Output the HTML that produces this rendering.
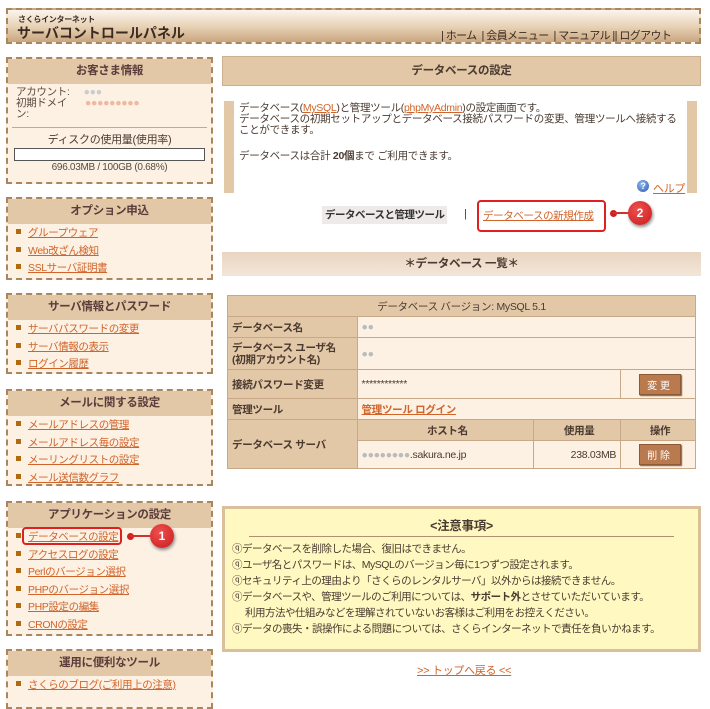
<!DOCTYPE html>
<html><head><meta charset="utf-8">
<style>
*{margin:0;padding:0;box-sizing:border-box}
body{width:710px;height:686px;overflow:hidden;background:#fff;font-family:"Liberation Sans","Noto Sans CJK JP",sans-serif;font-size:10.5px;color:#4a3a30;position:relative;letter-spacing:-0.3px}
.abs{position:absolute}
a{color:#d0642a;text-decoration:underline}
.hdr{left:6px;top:8px;width:695px;height:36px;border:2px dashed #a8865f;background:linear-gradient(#fbf5ee,#e9d3b8 50%,#c9a67f)}
.box{position:absolute;left:6px;width:207px;border:2px dashed #a8865f;background:#fdf1e4;overflow:hidden}
.box .t{background:#e3c8a8;text-align:center;font-weight:bold;font-size:11.5px;color:#5a3c3a;height:25px;line-height:25px}
.box ul{list-style:none;padding:1px 0 0 8px}
.box li{height:17.5px;line-height:17.5px;font-size:10.5px;letter-spacing:-0.4px}
.box li:before{content:"";display:inline-block;width:5px;height:5px;background:#b26a10;margin-right:7px;vertical-align:2px}
table{border-collapse:collapse}
td{border:1px solid #c9a887;font-size:10.5px}
.lb{background:#e3c8a8;color:#4a3a30;padding-left:4px;font-weight:bold}
.vl{background:#fdf1e4;padding-left:4px}
.btn{display:inline-block;background:#b97a4f;color:#fff;border:1px solid #8c5a36;box-shadow:1px 1px 1px #7a5a40;font-size:10px;padding:2px 7px;letter-spacing:3px}
.red{border:2px solid #e02020;border-radius:4px}
.num{width:24px;height:24px;border-radius:12px;background:radial-gradient(circle at 40% 35%,#f05050,#c81a1a);color:#fff;font-weight:bold;text-align:center;line-height:24px;font-size:12px;box-shadow:1px 2px 3px #888;letter-spacing:0}
.ln{height:2px;background:#d03030}
.dot{width:7px;height:7px;border-radius:4px;background:#d02020}
.nt div{white-space:nowrap}
</style></head><body>
<div class="abs hdr"></div>
<div class="abs" style="left:18px;top:14px;font-size:8px;font-weight:bold;color:#3a2a20">さくらインターネット</div>
<div class="abs" style="left:17px;top:23px;font-size:14px;font-weight:bold;color:#3a2a20;letter-spacing:0">サーバコントロールパネル</div>
<div class="abs" style="left:441px;top:27px;font-size:11px;color:#3a2a20;white-space:nowrap;letter-spacing:-0.6px">| ホーム &nbsp;| 会員メニュー &nbsp;| マニュアル || ログアウト</div>

<div class="box" style="top:57px;height:127px">
<div class="t">お客さま情報</div>
<div style="padding:3px 8px;font-size:10.5px;line-height:11px;color:#5a4a40">アカウント:<span style="color:#ccc;margin-left:14px">●●●</span><br>初期ドメイ<span style="color:#f0b8a0;margin-left:18px">●●●●●●●●●</span><br>ン:</div>
<div style="border-top:1px solid #c9a887;margin:4px 4px 0;padding-top:3px;text-align:center;font-size:11px">ディスクの使用量(使用率)</div>
<div style="margin:1px 6px;height:13px;border:1px solid #555;background:#fff"></div>
<div style="text-align:center;font-size:10px;color:#5a4a40">696.03MB / 100GB (0.68%)</div>
</div>
<div class="box" style="top:197px;height:83px"><div class="t">オプション申込</div><ul><li><a>グループウェア</a></li><li><a>Web改ざん検知</a></li><li><a>SSLサーバ証明書</a></li></ul></div>
<div class="box" style="top:293px;height:81px"><div class="t">サーバ情報とパスワード</div><ul><li><a>サーバパスワードの変更</a></li><li><a>サーバ情報の表示</a></li><li><a>ログイン履歴</a></li></ul></div>
<div class="box" style="top:389px;height:97px"><div class="t">メールに関する設定</div><ul><li><a>メールアドレスの管理</a></li><li><a>メールアドレス毎の設定</a></li><li><a>メーリングリストの設定</a></li><li><a>メール送信数グラフ</a></li></ul></div>
<div class="box" style="top:501px;height:135px"><div class="t">アプリケーションの設定</div><ul><li><a>データベースの設定</a></li><li><a>アクセスログの設定</a></li><li><a>Perlのバージョン選択</a></li><li><a>PHPのバージョン選択</a></li><li><a>PHP設定の編集</a></li><li><a>CRONの設定</a></li></ul></div>
<div class="box" style="top:649px;height:60px"><div class="t">運用に便利なツール</div><ul><li><a>さくらのブログ(ご利用上の注意)</a></li></ul></div>
<div class="abs red" style="left:22px;top:527px;width:100px;height:18px"></div>
<div class="abs dot" style="left:127px;top:533px"></div><div class="abs ln" style="left:130px;top:535px;width:22px"></div>
<div class="abs num" style="left:150px;top:524px">1</div>

<div class="abs" style="left:222px;top:56px;width:479px;height:30px;background:#e3c8a8;border:1px solid #cdb090;text-align:center;line-height:28px;font-weight:bold;font-size:11.5px;color:#4a3a30">データベースの設定</div>
<div class="abs" style="left:224px;top:101px;width:10px;height:92px;background:#e3c8a8"></div>
<div class="abs" style="left:687px;top:101px;width:10px;height:92px;background:#e3c8a8"></div>
<div class="abs" style="left:239px;top:103px;width:446px;font-size:10.5px;line-height:11px">データベース(<a>MySQL</a>)と管理ツール(<a>phpMyAdmin</a>)の設定画面です。<br>データベースの初期セットアップとデータベース接続パスワードの変更、管理ツールへ接続することができます。<br><div style="height:15px"></div>データベースは合計 <b>20個</b>まで ご利用できます。</div>
<div class="abs" style="left:637px;top:180px;width:12px;height:12px;border-radius:6px;background:radial-gradient(circle at 40% 35%,#8fb8f0,#2a5cb0);color:#fff;font-size:9px;text-align:center;line-height:12px;font-weight:bold">?</div>
<div class="abs" style="left:653px;top:180px;font-size:11px"><a>ヘルプ</a></div>
<div class="abs" style="left:322px;top:206px;height:18px;padding:0 3px;background:#eeeaea;font-weight:bold;font-size:10.5px;line-height:18px;color:#333;letter-spacing:-0.5px">データベースと管理ツール</div>
<div class="abs" style="left:464px;top:208px;font-size:11px">|</div>
<div class="abs red" style="left:477px;top:200px;width:129px;height:32px"></div>
<div class="abs" style="left:483px;top:208px;font-size:10.5px;letter-spacing:-0.4px"><a>データベースの新規作成</a></div>
<div class="abs dot" style="left:610px;top:210px"></div><div class="abs ln" style="left:613px;top:212px;width:18px"></div>
<div class="abs num" style="left:628px;top:201px">2</div>
<div class="abs" style="left:222px;top:252px;width:479px;height:24px;background:linear-gradient(#e8d5c0,#f3e6d8);text-align:center;line-height:24px;font-weight:bold;font-size:11.5px;color:#4a3a30">＊データベース 一覧＊</div>

<table class="abs" style="left:227px;top:295px;width:469px">
<tr style="height:21px"><td colspan="4" style="background:#e3c8a8;text-align:center;font-size:10.5px">データベース バージョン: MySQL 5.1</td></tr>
<tr style="height:21px"><td class="lb" style="width:130px">データベース名</td><td class="vl" colspan="3" style="color:#bbb">●●</td></tr>
<tr style="height:32px"><td class="lb" style="line-height:12px">データベース ユーザ名<br>(初期アカウント名)</td><td class="vl" colspan="3" style="color:#bbb">●●</td></tr>
<tr style="height:29px"><td class="lb">接続パスワード変更</td><td class="vl" colspan="2">************</td><td class="vl" style="text-align:center;width:75px"><span class="btn">変更</span></td></tr>
<tr style="height:21px"><td class="lb">管理ツール</td><td class="vl" colspan="3"><a style="font-weight:bold">管理ツール ログイン</a></td></tr>
<tr style="height:21px"><td class="lb" rowspan="2">データベース サーバ</td><td class="lb" style="text-align:center;width:177px">ホスト名</td><td class="lb" style="text-align:center;width:87px">使用量</td><td class="lb" style="text-align:center">操作</td></tr>
<tr style="height:28px"><td class="vl"><span style="color:#bbb">●●●●●●●●</span>.sakura.ne.jp</td><td class="vl" style="text-align:right;padding-right:4px">238.03MB</td><td class="vl" style="text-align:center"><span class="btn">削除</span></td></tr>
</table>

<div class="abs" style="left:222px;top:506px;width:479px;height:146px;background:#fff8c0;border:3px solid #d9c09a">
<div style="text-align:center;font-weight:bold;font-size:12.5px;margin-top:6px;color:#4a3a30">&lt;注意事項&gt;</div>
<div style="margin:2px 24px 0;border-top:1px solid #b09070"></div>
<div class="nt" style="padding:4px 0 0 7px;font-size:10.5px;line-height:16px;letter-spacing:-0.5px">
<div>ⓠデータベースを削除した場合、復旧はできません。</div>
<div>ⓠユーザ名とパスワードは、MySQLのバージョン毎に1つずつ設定されます。</div>
<div>ⓠセキュリティ上の理由より「さくらのレンタルサーバ」以外からは接続できません。</div>
<div>ⓠデータベースや、管理ツールのご利用については、<b>サポート外</b>とさせていただいています。</div>
<div style="padding-left:13px">利用方法や仕組みなどを理解されていないお客様はご利用をお控えください。</div>
<div>ⓠデータの喪失・誤操作による問題については、さくらインターネットで責任を負いかねます。</div>
</div></div>
<div class="abs" style="left:417px;top:662px;font-size:11px"><a>&gt;&gt; トップへ戻る &lt;&lt;</a></div>
</body></html>
